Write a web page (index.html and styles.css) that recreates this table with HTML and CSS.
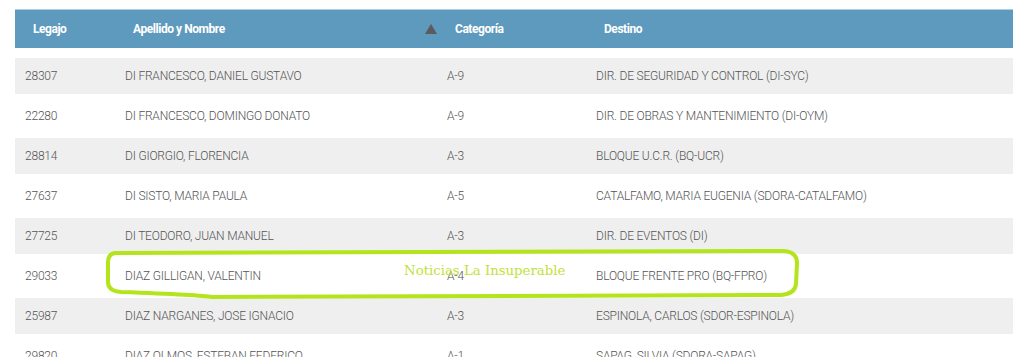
FILE: index.html
```html
<!DOCTYPE html>
<html lang="es">
<head>
<meta charset="utf-8">
<title>Legajos</title>
<link rel="stylesheet" href="styles.css">
</head>
<body>
<div class="wrap">
  <div class="thead">
    <div class="th">Legajo</div>
    <div class="th th-sort">Apellido y Nombre <span class="sort-arrow"></span></div>
    <div class="th">Categoría</div>
    <div class="th">Destino</div>
  </div>
  <div class="tbody">
    <div class="row odd"><div class="td">28307</div><div class="td">DI FRANCESCO, DANIEL GUSTAVO</div><div class="td">A-9</div><div class="td">DIR. DE SEGURIDAD Y CONTROL (DI-SYC)</div></div>
    <div class="row even"><div class="td">22280</div><div class="td">DI FRANCESCO, DOMINGO DONATO</div><div class="td">A-9</div><div class="td">DIR. DE OBRAS Y MANTENIMIENTO (DI-OYM)</div></div>
    <div class="row odd"><div class="td">28814</div><div class="td">DI GIORGIO, FLORENCIA</div><div class="td">A-3</div><div class="td">BLOQUE U.C.R. (BQ-UCR)</div></div>
    <div class="row even"><div class="td">27637</div><div class="td">DI SISTO, MARIA PAULA</div><div class="td">A-5</div><div class="td">CATALFAMO, MARIA EUGENIA (SDORA-CATALFAMO)</div></div>
    <div class="row odd"><div class="td">27725</div><div class="td">DI TEODORO, JUAN MANUEL</div><div class="td">A-3</div><div class="td">DIR. DE EVENTOS (DI)</div></div>
    <div class="row even"><div class="td">29033</div><div class="td">DIAZ GILLIGAN, VALENTIN</div><div class="td">A-4</div><div class="td">BLOQUE FRENTE PRO (BQ-FPRO)</div></div>
    <div class="row odd"><div class="td">25987</div><div class="td">DIAZ NARGANES, JOSE IGNACIO</div><div class="td">A-3</div><div class="td">ESPINOLA, CARLOS (SDOR-ESPINOLA)</div></div>
    <div class="row even"><div class="td">29820</div><div class="td">DIAZ OLMOS, ESTEBAN FEDERICO</div><div class="td">A-1</div><div class="td">SAPAG, SILVIA (SDORA-SAPAG)</div></div>
  </div>
  <svg class="mark" width="1024" height="357" viewBox="0 0 1024 357" aria-hidden="true">
    <path d="M116 253 L784 251 Q797 252 797 263 L796 284 Q795 294 781 295 L212 297 Q202 295 121 292 Q108 291 108 282 L108 263 Q108 253 116 253 Z" fill="none" stroke="#b4e41c" stroke-width="4" stroke-linejoin="round"/>
  </svg>
  <div class="watermark">Noticias La Insuperable</div>
</div>
</body>
</html>
```

FILE: styles.css
```css
html, body {
  margin: 0;
  padding: 0;
  background: #ffffff;
}
body {
  width: 1024px;
  height: 357px;
  overflow: hidden;
}
.wrap {
  position: relative;
  padding: 9px 11px 0 15px;
  font-family: Roboto, "Liberation Sans", sans-serif;
}
.thead {
  display: grid;
  grid-template-columns: 100px 322px 149px 1fr;
  height: 38px;
  background: #5d9abd;
  border-top: 1px solid #a9cde2;
  align-items: center;
}
.th {
  color: #ffffff;
  font-weight: 700;
  font-size: 12px;
  letter-spacing: -0.45px;
  padding-left: 18px;
  display: flex;
  align-items: center;
}
.th-sort {
  justify-content: space-between;
}
.sort-arrow {
  width: 0;
  height: 0;
  border-left: 6.5px solid transparent;
  border-right: 6.5px solid transparent;
  border-bottom: 10px solid #5b5b5b;
}
.tbody {
  margin-top: 10px;
}
.row {
  display: grid;
  grid-template-columns: 100px 322px 149px 1fr;
  align-items: center;
}
.row.odd {
  height: 36px;
  background: #efefef;
}
.row.even {
  height: 44px;
  background: #ffffff;
}
.td {
  padding-left: 10px;
  color: #555555;
  font-weight: 300;
  font-size: 12px;
  letter-spacing: -0.2px;
  white-space: nowrap;
}
.mark {
  position: absolute;
  left: 0;
  top: 0;
  pointer-events: none;
}
.watermark {
  position: absolute;
  left: 404px;
  top: 263px;
  font-family: "DejaVu Serif", "Liberation Serif", serif;
  font-size: 13.3px;
  color: #bfe23c;
}
```
